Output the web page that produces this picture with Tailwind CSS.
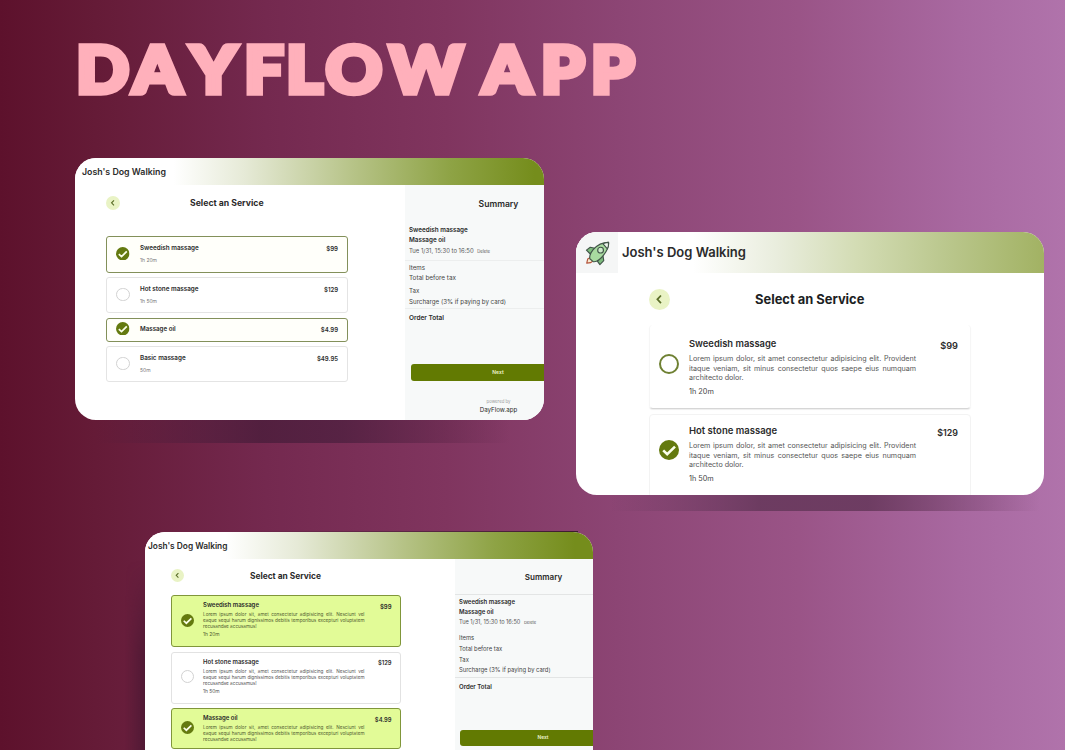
<!DOCTYPE html>
<html lang="en">
<head>
<meta charset="utf-8">
<title>Dayflow App</title>
<script src="https://cdn.jsdelivr.net/npm/@tailwindcss/browser@4"></script>
</head>
<body class="relative h-[750px] w-[1065px] overflow-hidden bg-[linear-gradient(90deg,#5d112c_0%,#651b37_9%,#74294f_25%,#80355f_42%,#8c4574_58%,#9a5487_75%,#a868a0_90%,#b073ab_100%)] font-['Inter',sans-serif] text-[#2b2b2b]">

<svg class="hidden">
  <symbol id="check" viewBox="0 0 20 20"><circle cx="10" cy="10" r="10" fill="#647a0f"/><path d="M4.2 10.4 8.2 14.2 16 6.6" fill="none" stroke="#fbffe9" stroke-width="2.6"/></symbol>
  <symbol id="back" viewBox="0 0 20 20"><circle cx="10" cy="10" r="10" fill="#e9f3c5"/><path d="M11.4 6.200 8 9.800l3.400 3.600" fill="none" stroke="#5c6f2a" stroke-width="1.7"/></symbol>
</svg>

<h1 class="absolute left-0 top-0">
  <svg class="h-[120px] w-[700px]" viewBox="0 0 700 120">
    <text transform="scale(1.06 1)" x="72 125.500 180 230.500 270 307.300 367.500 455.500 510.300 557.500" y="92.6" font-family="Lato" font-weight="900" font-size="65.5" fill="#ffb0bb" stroke="#ffb0bb" stroke-width="5.6" stroke-linejoin="miter">DAYFLOWAPP</text>
  </svg>
</h1>

<!-- Booking window, compact list -->
<div class="absolute left-[95px] top-[410px] h-[33px] w-[415px] bg-[linear-gradient(90deg,transparent,#4a1d3b_40%,#4f2040_60%,transparent)] opacity-80"></div>
<section class="absolute left-[75px] top-[157.5px] flex h-[262.5px] w-[469px] flex-col overflow-hidden rounded-[21px] bg-white">
  <header class="flex h-[27.5px] shrink-0 items-center bg-[linear-gradient(90deg,#fff_21%,#e6ead7_36%,#b5c285_60%,#8ea345_80%,#758d1c_98%)] pl-[7px] text-[8.8px] font-semibold">Josh's Dog Walking</header>
  <div class="flex flex-1">
    <main class="w-[330px] shrink-0 pl-[31px]">
      <div class="flex h-[36px] w-[242px] items-center">
        <svg class="h-[14px] w-[14px]"><use href="#back"/></svg>
        <h2 class="ml-[70px] pt-[2px] text-[8.7px] font-bold">Select an Service</h2>
      </div>
      <div class="mt-[15px] flex w-[242px] flex-col gap-[4.5px]">
        <article class="flex h-[36.5px] rounded-[3px] border border-[#83905a] bg-[#fffffa] px-[9px]">
          <svg class="mt-[9.500px] h-[13.5px] w-[13.5px] shrink-0"><use href="#check"/></svg>
          <div class="ml-[10.5px] pt-[6.500px]"><h3 class="text-[6.3px] leading-[8px] font-semibold">Sweedish massage</h3><p class="mt-[5px] text-[5px] leading-[7px] text-[#777]">1h 20m</p></div>
          <b class="ml-auto pt-[8px] text-[6.1px] leading-[8px] font-semibold">$99</b>
        </article>
        <article class="flex h-[36px] rounded-[3px] border border-[#e4e4e4] px-[9px]">
          <div class="mt-[9.500px] h-[13.5px] w-[13.5px] shrink-0 rounded-full border border-[#d2d2d2]"></div>
          <div class="ml-[10.5px] pt-[6.500px]"><h3 class="text-[6.3px] leading-[8px] font-semibold">Hot stone massage</h3><p class="mt-[5px] text-[5px] leading-[7px] text-[#777]">1h 50m</p></div>
          <b class="ml-auto pt-[7.500px] text-[6px] leading-[8px] font-semibold">$129</b>
        </article>
        <article class="flex h-[24px] rounded-[3px] border border-[#83905a] bg-[#fffffa] px-[9px]">
          <svg class="mt-[3px] h-[13.5px] w-[13.5px] shrink-0"><use href="#check"/></svg>
          <h3 class="ml-[10.5px] pt-[6px] text-[6.2px] leading-[8px] font-semibold">Massage oil</h3>
          <b class="ml-auto pt-[7px] text-[6px] leading-[8px] font-semibold">$4.99</b>
        </article>
        <article class="flex h-[36px] rounded-[3px] border border-[#e4e4e4] px-[9px]">
          <div class="mt-[9.500px] h-[13.5px] w-[13.5px] shrink-0 rounded-full border border-[#d2d2d2]"></div>
          <div class="ml-[10.5px] pt-[6.500px]"><h3 class="text-[6.3px] leading-[8px] font-semibold">Basic massage</h3><p class="mt-[5px] text-[5px] leading-[7px] text-[#777]">50m</p></div>
          <b class="ml-auto pt-[7.500px] text-[6px] leading-[8px] font-semibold">$49.95</b>
        </article>
      </div>
    </main>
    <aside class="w-[187px] shrink-0 bg-[#f7f9f9] text-[6.2px] leading-[11.2px]">
      <h2 class="h-[39.500px] text-center text-[8.6px] leading-[38px] font-semibold">Summary</h2>
      <div class="border-b border-[#eceeee] pb-[2px] pl-[4px] leading-[10.7px]">
        <p class="text-[6.3px] font-semibold">Sweedish massage</p>
        <p class="text-[6.3px] font-semibold">Massage oil</p>
        <p class="text-[5.9px] text-[#555]">Tue 1/31, 15:30 to 16:50 <span class="ml-[2px] text-[4.2px]">Delete</span></p>
      </div>
      <div class="border-b border-[#eceeee] pt-[1.500px] pb-[1px] pl-[4px] text-[#444]">
        <p>Items</p><p class="text-[6.37px]">Total before tax</p><p>Tax</p><p>Surcharge (3% if paying by card)</p>
      </div>
      <p class="pt-[4.500px] pl-[4px] text-[6.5px] font-semibold">Order Total</p>
      <div class="mt-[39px] ml-[5.5px] h-[17px] w-[175px] rounded-[3px] bg-[#627a02] text-center text-[5px] leading-[16px] font-semibold text-[#eef5d0]">Next</div>
      <p class="mt-[17px] text-center text-[4.3px] leading-[8px] text-[#999]">powered by</p>
      <p class="text-center text-[6.18px] leading-[8px]">DayFlow.app</p>
    </aside>
  </div>
</section>

<!-- Booking window, enlarged view -->
<div class="absolute left-[610px] top-[485px] h-[26px] w-[430px] bg-[linear-gradient(90deg,transparent,#68395d_35%,#68395d_60%,transparent)] opacity-90"></div>
<section class="absolute left-[576px] top-[232px] flex h-[263px] w-[468px] flex-col overflow-hidden rounded-[21px] bg-white">
  <header class="flex h-[41px] shrink-0 items-center bg-[linear-gradient(90deg,#fff_25%,#e9eddd_43%,#d3dcb4_60%,#b9c68b_80%,#a2b263_100%)]">
    <div class="flex h-full w-[42px] items-center justify-center bg-[#f5f6f6]">
      <svg class="mt-[2px] h-[25px] w-[25px]" viewBox="0 0 26 26" fill="none" stroke="#43564a" stroke-width="1.2" stroke-linejoin="round">
        <path d="M6 17 2.800 18.800 1.800 23 6 22.500 8.500 20.500" fill="#f7ead0" stroke="#b4533b"/>
        <path d="M10.500 7.500 5.500 6.500 1.500 9.500 5.500 13.500Z" fill="#7dbb7d"/>
        <path d="M18.700 15.500 19.500 20.500 15.500 24.500 12.500 20.500Z" fill="#7dbb7d"/>
        <path d="M24.500 1.500C18 1.500 12.500 4.500 8.500 9 6 12 4.500 15.500 5 18.500L8.500 21.500C12 22 16.500 18.500 19.500 14.500 23 10 25 6 24.500 1.500Z" fill="#a8dba0"/>
        <path d="M18.500 2.800C21 2 23 1.500 24.500 1.500 24.700 3.800 24.300 6 23.300 8.200Z" fill="#eef5ee"/>
        <circle cx="16.200" cy="9.500" r="3" fill="#cdeacb"/>
      </svg>
    </div>
    <span class="ml-[4px] pt-[1px] text-[13px] font-semibold">Josh's Dog Walking</span>
  </header>
  <main class="ml-[73px] w-[322px]">
    <div class="flex h-[52px] items-center">
      <svg class="h-[21px] w-[21px]"><use href="#back"/></svg>
      <h2 class="ml-[85px] pt-[2px] text-[12.92px] font-bold text-[#1d1f24]">Select an Service</h2>
    </div>
    <article class="flex h-[84px] rounded-[4px] border-x border-b border-x-[#f6f6f6] border-b-[#d6d6d6] pr-[12px] pl-[9px] shadow-[0_1px_1px_#eee]">
      <div class="mt-[28.500px] h-[20px] w-[20px] shrink-0 rounded-full border-[2px] border-[#6f8133]"></div>
      <div class="ml-[10px] w-[227px] pt-[13px]">
        <h3 class="text-[9.4px] leading-[12px] font-semibold">Sweedish massage</h3>
        <div class="mt-[4px] text-[7.15px] leading-[9.6px] whitespace-nowrap text-[#555]"><p class="[text-align-last:justify]">Lorem ipsum dolor, sit amet consectetur adipisicing elit. Provident</p><p class="[text-align-last:justify]">itaque veniam, sit minus consectetur quos saepe eius numquam</p><p>architecto dolor.</p></div>
        <p class="mt-[4px] text-[7.3px] leading-[10px] text-[#444]">1h 20m</p>
      </div>
      <b class="ml-auto pt-[15px] text-[9.2px] leading-[12px] font-semibold">$99</b>
    </article>
    <article class="mt-[5px] flex h-[84px] rounded-[4px] border border-[#f3f3f3] pr-[12px] pl-[9px]">
      <svg class="mt-[25px] h-[20px] w-[20px] shrink-0"><use href="#check"/></svg>
      <div class="ml-[10px] w-[227px] pt-[10px]">
        <h3 class="text-[9.5px] leading-[12px] font-semibold">Hot stone massage</h3>
        <div class="mt-[4px] text-[7.15px] leading-[9.6px] whitespace-nowrap text-[#555]"><p class="[text-align-last:justify]">Lorem ipsum dolor, sit amet consectetur adipisicing elit. Provident</p><p class="[text-align-last:justify]">itaque veniam, sit minus consectetur quos saepe eius numquam</p><p>architecto dolor.</p></div>
        <p class="mt-[4px] text-[7.3px] leading-[10px] text-[#444]">1h 50m</p>
      </div>
      <b class="ml-auto pt-[12px] text-[8.9px] leading-[12px] font-semibold">$129</b>
    </article>
  </main>
</section>

<!-- Booking window, highlighted selections -->
<div class="absolute left-[125px] top-[560px] h-[190px] w-[30px] bg-[linear-gradient(90deg,transparent,#35142a)] opacity-70 [mask-image:linear-gradient(180deg,transparent,#000_50%)]"></div>
<div class="absolute left-[220px] top-[531px] h-[10px] w-[358px] bg-[linear-gradient(90deg,transparent,#3c1c2e)]"></div>
<section class="absolute left-[145px] top-[532px] flex h-[250px] w-[448px] flex-col overflow-hidden rounded-[20px] bg-white">
  <header class="flex h-[27px] shrink-0 items-center bg-[linear-gradient(90deg,#fff_18%,#e6ead7_34%,#b5c285_58%,#8ea345_78%,#758d1c_96%)] pt-[1px] pl-[3px] text-[8.34px] font-semibold">Josh's Dog Walking</header>
  <div class="flex flex-1">
    <main class="w-[310px] shrink-0 pl-[25.500px]">
      <div class="flex h-[33px] items-center">
        <svg class="h-[13px] w-[13px]"><use href="#back"/></svg>
        <h2 class="ml-[66.5px] pt-[1.500px] text-[8.37px] font-bold">Select an Service</h2>
      </div>
      <div class="mt-[3px] flex w-[230px] flex-col gap-[4.500px]">
        <article class="flex h-[52px] rounded-[3px] border border-[#80963a] bg-[#e2fb97] pr-[8px] pl-[9px]">
          <svg class="mt-[17.500px] h-[13px] w-[13px] shrink-0"><use href="#check"/></svg>
          <div class="ml-[9.5px] w-[161.500px] pt-[5px]">
            <h3 class="text-[6px] leading-[8px] font-semibold">Sweedish massage</h3>
            <div class="mt-[2px] text-[4.68px] leading-[6.1px] whitespace-nowrap text-[#505b30]"><p class="[text-align-last:justify]">Lorem ipsum dolor sit, amet consectetur adipisicing elit. Nesciunt vel</p><p class="[text-align-last:justify]">eaque sequi harum dignissimos debitis temporibus excepturi voluptatem</p><p>recusandae accusamus!</p></div>
            <p class="mt-[2px] text-[4.9px] leading-[7px] text-[#505b30]">1h 20m</p>
          </div>
          <b class="ml-auto pt-[6.500px] text-[6px] leading-[8px] font-semibold">$99</b>
        </article>
        <article class="flex h-[52px] rounded-[3px] border border-[#e2e2e2] bg-white pr-[8px] pl-[9px]">
          <div class="mt-[17.500px] h-[13px] w-[13px] shrink-0 rounded-full border border-[#d2d2d2]"></div>
          <div class="ml-[9.5px] w-[161.500px] pt-[5px]">
            <h3 class="text-[6px] leading-[8px] font-semibold">Hot stone massage</h3>
            <div class="mt-[2px] text-[4.68px] leading-[6.1px] whitespace-nowrap text-[#555]"><p class="[text-align-last:justify]">Lorem ipsum dolor sit, amet consectetur adipisicing elit. Nesciunt vel</p><p class="[text-align-last:justify]">eaque sequi harum dignissimos debitis temporibus excepturi voluptatem</p><p>recusandae accusamus!</p></div>
            <p class="mt-[2px] text-[4.9px] leading-[7px] text-[#555]">1h 50m</p>
          </div>
          <b class="ml-auto pt-[6.500px] text-[5.8px] leading-[8px] font-semibold">$129</b>
        </article>
        <article class="flex h-[41px] rounded-[3px] border border-[#80963a] bg-[#e2fb97] pr-[8px] pl-[9px]">
          <svg class="mt-[12px] h-[13px] w-[13px] shrink-0"><use href="#check"/></svg>
          <div class="ml-[9.5px] w-[161.500px] pt-[5px]">
            <h3 class="text-[6px] leading-[8px] font-semibold">Massage oil</h3>
            <div class="mt-[2px] text-[4.68px] leading-[6.1px] whitespace-nowrap text-[#505b30]"><p class="[text-align-last:justify]">Lorem ipsum dolor sit, amet consectetur adipisicing elit. Nesciunt vel</p><p class="[text-align-last:justify]">eaque sequi harum dignissimos debitis temporibus excepturi voluptatem</p><p>recusandae accusamus!</p></div>
          </div>
          <b class="ml-auto pt-[6.500px] text-[5.8px] leading-[8px] font-semibold">$4.99</b>
        </article>
      </div>
    </main>
    <aside class="w-[177px] shrink-0 bg-[#f7f9f9] text-[5.85px] leading-[10.7px]">
      <h2 class="h-[36px] border-b border-[#e3e5e5] text-center text-[8.1px] leading-[36px] font-semibold">Summary</h2>
      <div class="pt-[1.500px] pl-[4px] leading-[10.2px]">
        <p class="text-[6px] font-semibold">Sweedish massage</p>
        <p class="text-[6px] font-semibold">Massage oil</p>
        <p class="text-[5.6px] text-[#555]">Tue 1/31, 15:30 to 16:50 <span class="ml-[2px] text-[4px]">Delete</span></p>
      </div>
      <div class="mt-[5px] border-b border-[#e3e5e5] pb-[1px] pl-[4px] text-[#444]">
        <p>Items</p><p>Total before tax</p><p>Tax</p><p>Surcharge (3% if paying by card)</p>
      </div>
      <p class="pt-[4px] pl-[4px] text-[6.1px] font-semibold">Order Total</p>
      <div class="mt-[37px] ml-[5px] h-[16px] w-[166px] rounded-[3px] bg-[#627a02] text-center text-[4.8px] leading-[15px] font-semibold text-[#eef5d0]">Next</div>
    </aside>
  </div>
</section>
</body>
</html>
